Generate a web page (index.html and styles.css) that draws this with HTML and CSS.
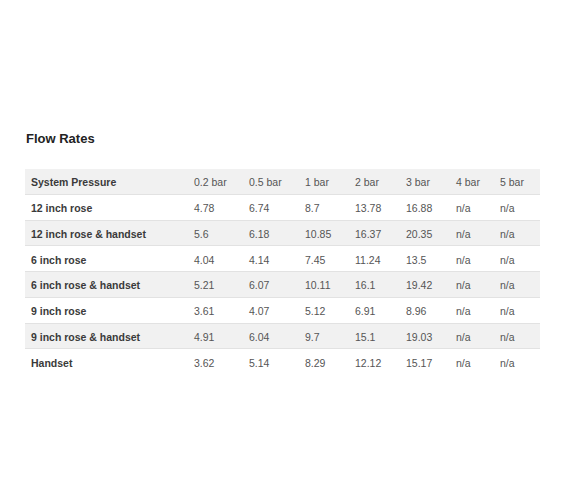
FILE: index.html
```html
<!DOCTYPE html>
<html>
<head>
<meta charset="utf-8">
<link rel="stylesheet" href="styles.css">
</head>
<body>
<div class="page">
  <h2 class="title">Flow Rates</h2>
  <table class="flow">
    <colgroup>
      <col class="c0"><col class="c1"><col class="c2"><col class="c3"><col class="c4"><col class="c5"><col class="c6"><col class="c7">
    </colgroup>
    <tr class="alt"><td class="name">System Pressure</td><td>0.2 bar</td><td>0.5 bar</td><td>1 bar</td><td>2 bar</td><td>3 bar</td><td>4 bar</td><td>5 bar</td></tr>
    <tr><td class="name">12 inch rose</td><td>4.78</td><td>6.74</td><td>8.7</td><td>13.78</td><td>16.88</td><td>n/a</td><td>n/a</td></tr>
    <tr class="alt"><td class="name">12 inch rose &amp; handset</td><td>5.6</td><td>6.18</td><td>10.85</td><td>16.37</td><td>20.35</td><td>n/a</td><td>n/a</td></tr>
    <tr><td class="name">6 inch rose</td><td>4.04</td><td>4.14</td><td>7.45</td><td>11.24</td><td>13.5</td><td>n/a</td><td>n/a</td></tr>
    <tr class="alt"><td class="name">6 inch rose &amp; handset</td><td>5.21</td><td>6.07</td><td>10.11</td><td>16.1</td><td>19.42</td><td>n/a</td><td>n/a</td></tr>
    <tr><td class="name">9 inch rose</td><td>3.61</td><td>4.07</td><td>5.12</td><td>6.91</td><td>8.96</td><td>n/a</td><td>n/a</td></tr>
    <tr class="alt"><td class="name">9 inch rose &amp; handset</td><td>4.91</td><td>6.04</td><td>9.7</td><td>15.1</td><td>19.03</td><td>n/a</td><td>n/a</td></tr>
    <tr class="last"><td class="name">Handset</td><td>3.62</td><td>5.14</td><td>8.29</td><td>12.12</td><td>15.17</td><td>n/a</td><td>n/a</td></tr>
  </table>
</div>
</body>
</html>
```

FILE: styles.css
```css
html, body {
  margin: 0;
  padding: 0;
  background: #fff;
}
.page {
  padding: 131px 30px 0 25px;
  font-family: "Liberation Sans", Arial, sans-serif;
}
.title {
  margin: 0 0 22px 1px;
  font-size: 13px;
  line-height: 16px;
  font-weight: bold;
  color: #222;
}
.flow {
  width: 515px;
  border-collapse: collapse;
  table-layout: fixed;
  font-size: 10.5px;
  color: #555;
}
.c0 { width: 169px; }
.c1 { width: 55px; }
.c2 { width: 56px; }
.c3 { width: 50px; }
.c4 { width: 51px; }
.c5 { width: 50px; }
.c6 { width: 44px; }
.c7 { width: 40px; }
.flow td {
  height: 22.75px;
  padding: 2px 0 0 0;
  border-bottom: 1px solid #e2e2e2;
  vertical-align: middle;
  white-space: nowrap;
}
.flow td.name {
  padding-left: 6px;
  font-weight: bold;
  color: #3a3a3a;
}
.flow tr.alt td {
  background: #f1f1f1;
}
.flow tr.last td {
  border-bottom: none;
}
```
